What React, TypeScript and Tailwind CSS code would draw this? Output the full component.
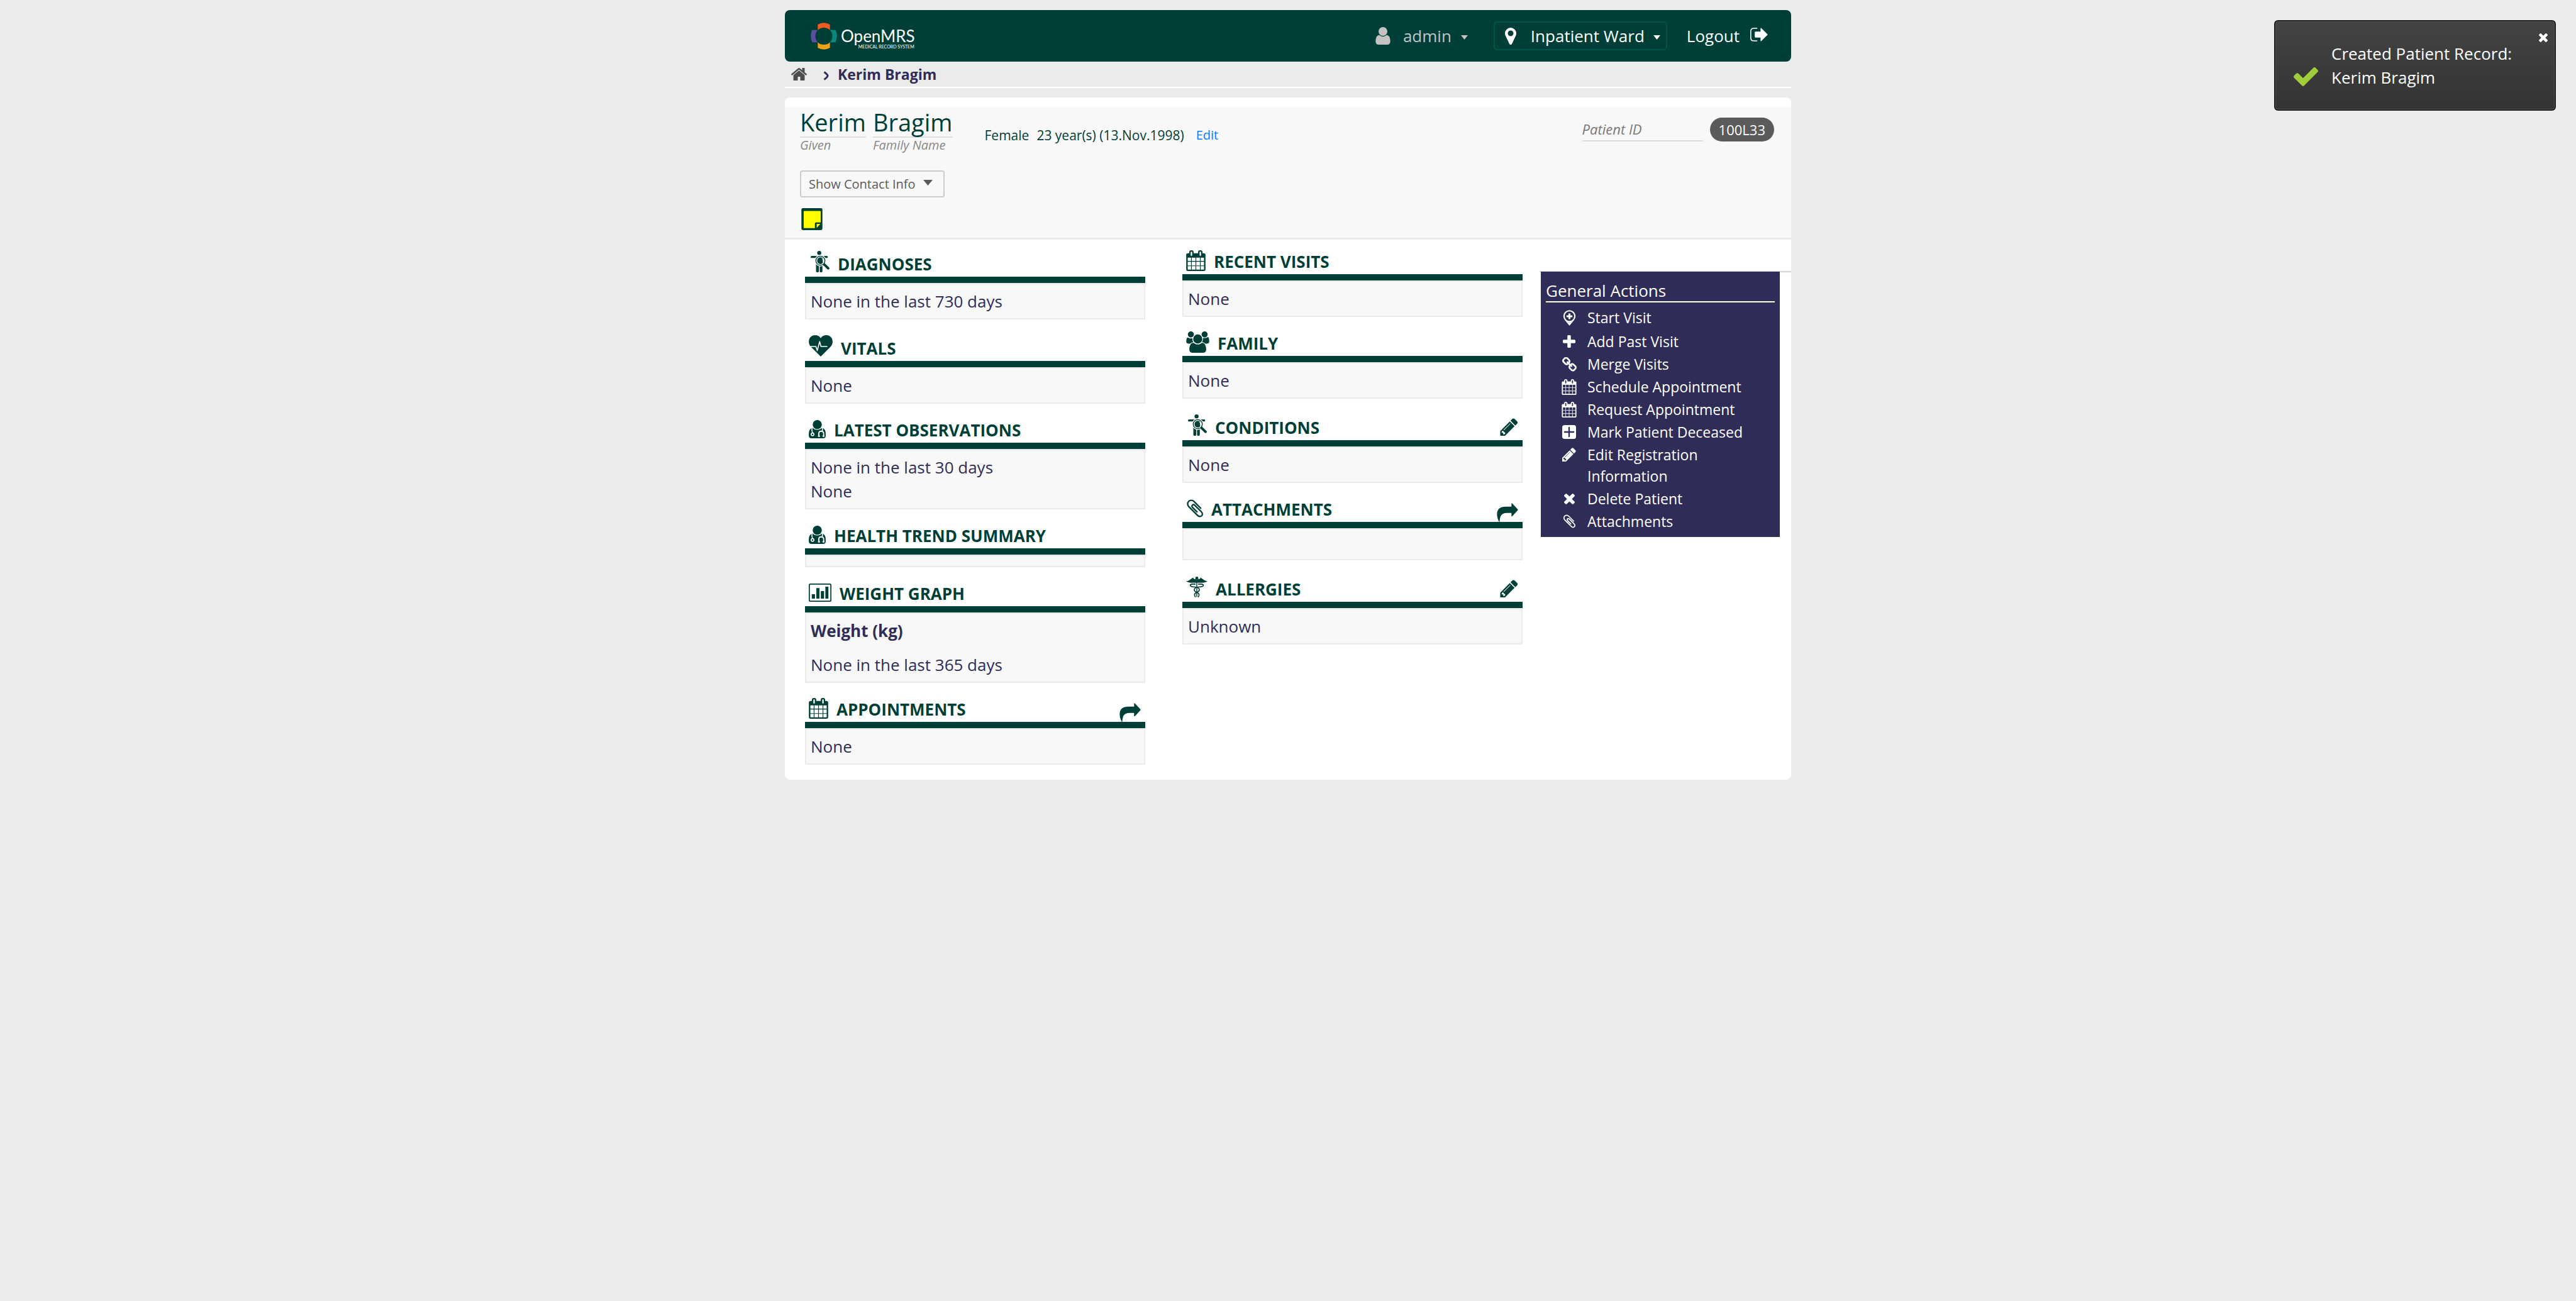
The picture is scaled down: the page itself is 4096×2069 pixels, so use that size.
import React from "react";

type IconProps = { className?: string };

function Glyph({ box, d, className }: { box: string; d: string; className?: string }) {
  return (
    <svg viewBox={box} className={className} fill="currentColor" aria-hidden="true">
      <path d={d} />
    </svg>
  );
}

const HomeIcon = ({ className }: IconProps) => (
  <Glyph
    className={className}
    box="97 253 1598 1283"
    d="M1472 992v480q0 26-19 45t-45 19h-384v-384h-256v384h-384q-26 0-45-19t-19-45v-480q0-1 .5-3t.5-3l575-474 575 474q1 2 1 6zm223-69l-62 74q-8 9-21 11h-3q-13 0-21-7l-692-577-692 577q-12 8-24 7-13-2-21-11l-62-74q-8-10-7-23.5t11-21.5l719-599q32-26 76-26t76 26l244 204v-195q0-14 9-23t23-9h192q14 0 23 9t9 23v408l219 182q10 8 11 21.5t-7 23.5z"
  />
);

const UserIcon = ({ className }: IconProps) => (
  <Glyph
    className={className}
    box="256 128 1280 1536"
    d="M1536 1399q0 109-62.5 187t-150.5 78h-854q-88 0-150.5-78t-62.5-187q0-85 8.5-160.5t31.5-152 58.5-131 94-89 134.5-34.5q131 128 313 128t313-128q76 0 134.5 34.5t94 89 58.5 131 31.5 152 8.5 160.5zm-256-887q0 159-112.5 271.5t-271.5 112.5-271.5-112.5-112.5-271.5 112.5-271.5 271.5-112.5 271.5 112.5 112.5 271.5z"
  />
);

const PinIcon = ({ className }: IconProps) => (
  <Glyph
    className={className}
    box="384 128 1024 1536"
    d="M1152 640q0-106-75-181t-181-75-181 75-75 181 75 181 181 75 181-75 75-181zm256 0q0 109-33 179l-364 774q-16 33-47.5 52t-67.5 19-67.5-19-46.5-52l-365-774q-33-70-33-179 0-212 150-362t362-150 362 150 150 362z"
  />
);

const SignOutIcon = ({ className }: IconProps) => (
  <svg viewBox="0 0 35 27" className={className} aria-hidden="true">
    <path d="M14 1H7Q1 1 1 7V20Q1 26 7 26H14" fill="none" stroke="currentColor" strokeWidth="2" />
    <path
      fill="currentColor"
      d="M20.5 1.6Q20.5 0 22 .6L34 12.6Q35 13.5 34 14.4L22 26.4Q20.5 27 20.5 25.4V19.5H10.5Q9 19.5 9 18V9Q9 7.5 10.5 7.5H20.5z"
    />
  </svg>
);

const CalendarIcon = ({ className }: IconProps) => (
  <Glyph
    className={className}
    box="64 0 1664 1792"
    d="M192 1664h288v-288h-288v288zm352 0h320v-288h-320v288zm-352-352h288v-320h-288v320zm352 0h320v-320h-320v320zm-352-384h288v-288h-288v288zm736 736h320v-288h-320v288zm-384-736h320v-288h-320v288zm768 736h288v-288h-288v288zm-384-352h320v-320h-320v320zm-352-864v-288q0-13-9.5-22.5t-22.5-9.5h-64q-13 0-22.5 9.5t-9.5 22.5v288q0 13 9.5 22.5t22.5 9.5h64q13 0 22.5-9.5t9.5-22.5zm736 864h288v-320h-288v320zm-384-384h320v-288h-320v288zm384 0h288v-288h-288v288zm32-480v-288q0-13-9.5-22.5t-22.5-9.5h-64q-13 0-22.5 9.5t-9.5 22.5v288q0 13 9.5 22.5t22.5 9.5h64q13 0 22.5-9.5t9.5-22.5zm384-64v1280q0 52-38 90t-90 38h-1408q-52 0-90-38t-38-90v-1280q0-52 38-90t90-38h128v-96q0-66 47-113t113-47h64q66 0 113 47t47 113v96h384v-96q0-66 47-113t113-47h64q66 0 113 47t47 113v96h128q52 0 90 38t38 90z"
  />
);

const PlusIcon = ({ className }: IconProps) => (
  <Glyph
    className={className}
    box="192 128 1408 1408"
    d="M1600 736v192q0 40-28 68t-68 28h-416v416q0 40-28 68t-68 28h-192q-40 0-68-28t-28-68v-416h-416q-40 0-68-28t-28-68v-192q0-40 28-68t68-28h416v-416q0-40 28-68t68-28h192q40 0 68 28t28 68v416h416q40 0 68 28t28 68z"
  />
);

const TimesIcon = ({ className }: IconProps) => (
  <Glyph
    className={className}
    box="302 366 1188 1188"
    d="M1490 1322q0 40-28 68l-136 136q-28 28-68 28t-68-28l-294-294-294 294q-28 28-68 28t-68-28l-136-136q-28-28-28-68t28-68l294-294-294-294q-28-28-28-68t28-68l136-136q28-28 68-28t68 28l294 294 294-294q28-28 68-28t68 28l136 136q28 28 28 68t-28 68l-294 294 294 294q28 28 28 68z"
  />
);

const CheckIcon = ({ className }: IconProps) => (
  <Glyph
    className={className}
    box="121 334 1550 1188"
    d="M1671 566q0 40-28 68l-724 724-136 136q-28 28-68 28t-68-28l-136-136-362-362q-28-28-28-68t28-68l136-136q28-28 68-28t68 28l294 295 656-657q28-28 68-28t68 28l136 136q28 28 28 68z"
  />
);

const PencilIcon = ({ className }: IconProps) => (
  <Glyph
    className={className}
    box="128 128 1536 1536"
    d="M491 1536l91-91-235-235-91 91v107h128v128h107zm523-928q0-22-22-22-10 0-17 7l-542 542q-7 7-7 17 0 22 22 22 10 0 17-7l542-542q7-7 7-17zm-54-192l416 416-832 832h-416v-416zm683 96q0 53-37 90l-166 166-416-416 166-165q36-38 90-38 53 0 91 38l235 234q37 39 37 91z"
  />
);

const ClipIcon = ({ className }: IconProps) => (
  <Glyph
    className={className}
    box="128 128 1468 1536"
    d="M1596 1385q0 117-79 196t-196 79q-135 0-235-100l-777-776q-113-115-113-271 0-159 110-270t269-111q158 0 273 113l605 606q10 10 10 22 0 16-30.5 46.5t-46.5 30.5q-13 0-23-10l-606-607q-79-77-181-77-106 0-179 75t-73 181q0 105 76 181l776 777q63 63 145 63 64 0 106-42t42-106q0-82-63-145l-581-581q-26-24-60-24-29 0-48 19t-19 48q0 32 25 59l410 410q10 10 10 22 0 16-31 47t-47 31q-12 0-22-10l-410-410q-63-61-63-149 0-82 57-139t139-57q88 0 149 63l581 581q100 98 100 235z"
  />
);

const LinkIcon = ({ className }: IconProps) => (
  <Glyph
    className={className}
    box="80 79 1632 1569"
    d="M1520 1216q0-40-28-68l-208-208q-28-28-68-28-42 0-72 32 3 3 19 18.5t21.5 21.5 15 19 13 25.5 3.5 27.5q0 40-28 68t-68 28q-15 0-27.5-3.5t-25.5-13-19-15-21.5-21.5-18.5-19q-33 31-33 73 0 40 28 68l206 207q27 27 68 27 40 0 68-26l147-146q28-28 28-67zm-703-705q0-40-28-68l-206-207q-28-28-68-28-39 0-68 27l-147 146q-28 28-28 67 0 40 28 68l208 208q27 27 68 27 42 0 72-31-3-3-19-18.5t-21.5-21.5-15-19-13-25.5-3.5-27.5q0-40 28-68t68-28q15 0 27.5 3.5t25.5 13 19 15 21.5 21.5 18.5 19q33-31 33-73zm895 705q0 120-85 203l-147 146q-83 83-203 83-121 0-204-85l-206-207q-83-83-83-203 0-123 88-209l-88-88q-86 88-208 88-120 0-204-84l-208-208q-84-84-84-204t85-203l147-146q83-83 203-83 121 0 204 85l206 207q83 83 83 203 0 123-88 209l88 88q86-88 208-88 120 0 204 84l208 208q84 84 84 204z"
  />
);

const FamilyIcon = ({ className }: IconProps) => (
  <Glyph
    className={className}
    box="0 0 1920 1792"
    d="M593 896q-162 5-265 128h-134q-82 0-138-40.5t-56-118.5q0-353 124-353 6 0 43.5 21t97.5 42.5 119 21.5q67 0 133-23-5 37-5 66 0 159 81 288zm1071 637q0 120-73 189.5t-194 69.5h-874q-121 0-194-69.5t-73-189.5q0-53 3.5-103.5t14-109 26.5-108.5 43-97.5 62-81 85.5-53.5 111.5-20q10 0 43 21.5t73 48 107 48 135 21.5 135-21.5 107-48 73-48 43-21.5q61 0 111.5 20t85.5 53.5 62 81 43 97.5 26.5 108.5 14 109 3.5 103.5zm-1024-1277q0 106-75 181t-181 75-181-75-75-181 75-181 181-75 181 75 75 181zm704 384q0 159-112.5 271.5t-271.5 112.5-271.5-112.5-112.5-271.5 112.5-271.5 271.5-112.5 271.5 112.5 112.5 271.5zm576 225q0 78-56 118.5t-138 40.5h-134q-103-123-265-128 81-129 81-288 0-29-5-66 66 23 133 23 59 0 119-21.5t97.5-42.5 43.5-21q124 0 124 353zm-128-609q0 106-75 181t-181 75-181-75-75-181 75-181 181-75 181 75 75 181z"
  />
);

const DiagnosisIcon = ({ className }: IconProps) => (
  <svg viewBox="24 29 123 127" className={className} aria-hidden="true">
    <g fill="currentColor">
      <circle cx="86" cy="41" r="12" />
      <rect x="35" y="59" width="102" height="12" rx="6" />
      <rect x="67" y="62" width="38" height="44" />
      <rect x="67" y="100" width="17" height="56" rx="7" />
      <rect x="89" y="100" width="16" height="56" rx="7" />
    </g>
    <path d="M108 103L140 133" stroke="#fff" strokeWidth="24" />
    <circle cx="93" cy="87" r="34" fill="#fff" />
    <path d="M112 106L139 132" stroke="currentColor" strokeWidth="15" strokeLinecap="round" />
    <circle cx="93" cy="87" r="27" fill="#fff" stroke="currentColor" strokeWidth="5" />
    <path d="M93 67Q104 66 107 73V101Q101 107 93 107Q74 105 74 87Q74 69 93 67z" fill="currentColor" />
    <path d="M101 73Q108 77 109 86" fill="none" stroke="#fff" strokeWidth="3" />
  </svg>
);

const VitalsIcon = ({ className }: IconProps) => (
  <svg viewBox="24 530 141 127" className={className} aria-hidden="true">
    <path
      fill="currentColor"
      d="M94.500 657L38 601C26 589 24 579 24 568C24 546 40 530 60 530C76 530 88 537 94.500 548C101 537 113 530 129 530C149 530 165 546 165 568C165 579 163 589 151 601z"
    />
    <path
      d="M34 597H66L74 622L88 568L96 597H134"
      fill="none"
      stroke="#fff"
      strokeWidth="6"
      strokeLinejoin="round"
    />
  </svg>
);

const DoctorIcon = ({ className }: IconProps) => (
  <svg viewBox="24 1035 100 108" className={className} aria-hidden="true">
    <circle cx="74" cy="1062" r="27" fill="currentColor" />
    <path
      fill="currentColor"
      d="M46 1081Q24 1087 24 1119V1128Q24 1143 40 1143H108Q124 1143 124 1128V1119Q124 1087 102 1081Q90 1093 74 1093Q58 1093 46 1081z"
    />
    <g fill="none" stroke="#fff" strokeWidth="6">
      <path d="M43 1080Q40 1094 46 1112" />
      <path d="M103 1080Q107 1090 103 1100" />
      <path d="M83 1128V1116Q83 1101 97 1101Q112 1101 112 1116V1128" strokeWidth="7" />
      <circle cx="46" cy="1120" r="8" />
    </g>
    <circle cx="84" cy="1130" r="6" fill="#fff" />
    <circle cx="111" cy="1130" r="6" fill="#fff" />
  </svg>
);

const ChartIcon = ({ className }: IconProps) => (
  <svg viewBox="24 357 135 108" className={className} aria-hidden="true">
    <rect x="27" y="360" width="129" height="102" rx="7" fill="none" stroke="currentColor" strokeWidth="7" />
    <path fill="currentColor" d="M42 420h19v27h-19zM69 384h19v63h-19zM96 402h19v45h-19zM123 375h18v72h-18z" />
  </svg>
);

const ShareIcon = ({ className }: IconProps) => (
  <svg viewBox="0 0 41 37" className={className} aria-hidden="true">
    <path
      fill="currentColor"
      d="M28.300 1.200Q28.300 -.3 29.800 .5L40.600 12.300Q41.300 13.200 40.600 14.100L29.800 26Q28.300 26.800 28.300 25.400V19.300H20Q10 19.300 7 26Q5 31 5 37H4.300Q0 30 0 22Q0 7 17 7H28.300z"
    />
  </svg>
);

const CaduceusIcon = ({ className }: IconProps) => (
  <svg viewBox="0 0 42 41" className={className} aria-hidden="true">
    <g fill="currentColor">
      <circle cx="21" cy="3" r="2.900" />
      <path d="M0 9Q4 8.800 7 6.500L13.500 1.800Q15.500 6.500 18 4.500L21 7L24 4.500Q26.500 6.500 28.500 1.800L35 6.500Q38 8.800 42 9Q38.500 12 33 12H9Q3.500 12 0 9z" />
    </g>
    <g fill="none" stroke="currentColor">
      <path d="M21 5V40" strokeWidth="1.800" />
      <path
        strokeWidth="2"
        d="M18.500 14.800H12Q8 15.200 8 17.500Q9 20 17 20.500Q26 21.500 26 26Q26 29 21 31Q16.500 33 16.500 36Q16.500 38.500 18.500 40.500M23.500 14.800H30Q34 15.200 34 17.500Q33 20 25 20.500Q16 21.500 16 26Q16 29 21 31Q25.500 33 25.500 36Q25.500 38.500 23.500 40.500"
      />
    </g>
  </svg>
);

const StartVisitIcon = ({ className }: IconProps) => (
  <svg viewBox="50 87 73 90" className={className} aria-hidden="true">
    <circle cx="86.500" cy="122.500" r="31" fill="none" stroke="currentColor" strokeWidth="8" />
    <path d="M62 147Q86 168 111 147L86.500 177z" fill="currentColor" />
    <path d="M70 123H103M86.500 107V139" stroke="currentColor" strokeWidth="11" />
  </svg>
);

const DeceasedIcon = ({ className }: IconProps) => (
  <svg viewBox="0 0 84 84" className={className} aria-hidden="true">
    <rect width="84" height="84" rx="14" fill="currentColor" />
    <path d="M15 42H69M42 15V69" stroke="#2f2d57" strokeWidth="9" strokeLinecap="round" />
  </svg>
);

const Caret = ({ className }: IconProps) => (
  <svg viewBox="0 0 14 8" preserveAspectRatio="none" className={className} aria-hidden="true">
    <path d="M0 0H14L7 8z" fill="currentColor" />
  </svg>
);

function Logo() {
  return (
    <a href="#home" className="flex items-end gap-[6px]" aria-label="OpenMRS Medical Record System">
      <svg viewBox="0 0 52 53" className="h-[43px] w-[42px]" aria-hidden="true">
        <path d="M14 14.500V3.500Q26 -3 38 3.500V14.500A17.500 17.500 0 0 0 14 14.500z" fill="#f15b22" />
        <path d="M14 38.500V49.500Q26 56 38 49.500V38.500A17.500 17.500 0 0 1 14 38.500z" fill="#f0a115" />
        <path d="M14 14.500H3Q-2.500 26.500 3 38.500H14A17.500 17.500 0 0 1 14 14.500z" fill="#5b4fa0" />
        <path d="M38 14.500H49Q54.500 26.500 49 38.500H38A17.500 17.500 0 0 0 38 14.500z" fill="#0a8a7b" />
      </svg>
      <span className="flex flex-col items-end pb-px font-['Lato'] text-white">
        <span className="text-[26px] leading-[26px]">OpenMRS</span>
        <span className="pr-px text-[7px] leading-[8px]">MEDICAL RECORD SYSTEM</span>
      </span>
    </a>
  );
}

function TopBar() {
  return (
    <header className="flex h-[82px] items-center justify-between rounded-lg bg-[#003f37] pr-[37px] pl-[41px] text-[26px] leading-[38px] text-white">
      <Logo />
      <nav className="flex items-center">
        <button type="button" className="flex items-center text-[#c4c4c4]">
          <UserIcon className="mr-5 h-[28px] w-[24px]" />
          admin
          <Caret className="mt-1 ml-[15px] h-[7px] w-[11px]" />
        </button>
        <button
          type="button"
          className="ml-[41px] flex h-[46px] items-center rounded-md border-2 border-[#00554b] pr-[9px] pl-[16px]"
        >
          <PinIcon className="mr-[23px] h-[27px] w-[18px]" />
          Inpatient Ward
          <Caret className="mt-1 ml-[14px] h-[7px] w-[11px]" />
        </button>
        <a href="#logout" className="ml-[31px] flex items-center">
          Logout
          <SignOutIcon className="mb-1 ml-[17px] h-[22px] w-[28px]" />
        </a>
      </nav>
    </header>
  );
}

function Breadcrumbs() {
  return (
    <nav
      aria-label="Breadcrumb"
      className="flex h-[42px] items-center border-b-2 border-white pl-[10px] text-[23px] font-bold text-[#2f2d57]"
    >
      <a href="#home" aria-label="Home" className="text-[#4d4d4d]">
        <HomeIcon className="h-[20px] w-[25px]" />
      </a>
      <svg viewBox="0 0 9 15" className="mt-1 mr-[14px] ml-[26px] h-[15px] w-[9px]" aria-hidden="true">
        <path d="M1.500 1.500Q7 5.500 7 7.500T1.500 13.500" fill="none" stroke="#2f2d57" strokeWidth="3" />
      </svg>
      Kerim Bragim
    </nav>
  );
}

function NamePart({ value, label }: { value: string; label: string }) {
  return (
    <div>
      <div className="border-b-2 border-[#dddddd] text-[38px] leading-[46px]">{value}</div>
      <div className="text-[20px] leading-[24px] text-[#888888] italic">{label}</div>
    </div>
  );
}

function PatientHeader() {
  return (
    <section className="border-b-3 border-[#ebebeb] bg-[#f8f8f8] px-6 pb-3 text-[#003f37]">
      <div className="flex items-start">
        <div className="flex gap-[11px]">
          <NamePart value="Kerim" label="Given" />
          <NamePart value="Bragim" label="Family Name" />
        </div>
        <div className="mt-[29px] ml-[51px] flex gap-[12px] text-[21px] leading-[30px]">
          <span>Female</span>
          <span>23 year(s) (13.Nov.1998)</span>
          <a href="#edit" className="ml-[7px] text-[20px] text-[#007fff]">
            Edit
          </a>
        </div>
        <div className="mt-4 mr-[3px] ml-auto flex items-start gap-[11px]">
          <div className="w-[192px] border-b-2 border-[#dddddd] text-[22px] leading-[36px] text-[#777777] italic">
            Patient ID
          </div>
          <div className="rounded-full bg-[#5b5b5b] px-[14px] text-[22px] leading-[38px] text-white">100L33</div>
        </div>
      </div>
      <button
        type="button"
        className="mt-[28px] flex h-[43px] items-center gap-3 rounded border-2 border-[#cccccc] pr-[17px] pl-[12px] text-[20px] text-[#5b5b5b]"
      >
        Show Contact Info
        <Caret className="mb-1 h-[9px] w-[15px]" />
      </button>
      <button type="button" aria-label="Sticky note" className="mt-[17px] ml-[2px] block">
        <svg viewBox="0 0 42 44" className="h-[35px] w-[34px]" aria-hidden="true">
          <rect width="42" height="44" rx="3" fill="#003f37" />
          <path d="M6 5.500H37Q38.500 5.500 38.500 7V28.500H29Q27 28.500 27 30.500V40H6Q4.500 40 4.500 38.500V7Q4.500 5.500 6 5.500z" fill="#ffff00" />
          <path d="M30.500 31.500H38L30.500 39.500z" fill="#ffff00" />
        </svg>
      </button>
    </section>
  );
}

type SectionProps = {
  title: string;
  icon: React.ReactNode;
  tall?: boolean;
  action?: React.ReactNode;
  children?: React.ReactNode;
};

function InfoSection({ title, icon, tall, action, children }: SectionProps) {
  return (
    <section className="mb-4">
      <div
        className={
          tall
            ? "flex h-[60px] items-end border-b-10 border-[#003f37] pr-[7px] pl-[6px] text-[#003f37]"
            : "flex h-[56px] items-end border-b-10 border-[#003f37] pr-[7px] pl-[6px] text-[#003f37]"
        }
      >
        {icon}
        <h3 className="ml-[13px] flex-1 text-[26px] leading-[40px] font-bold">{title}</h3>
        {action}
      </div>
      <div className="border-2 border-[#ebebeb] bg-[#f8f8f8] px-[7px] py-2 text-[26px] leading-[38px] text-[#2f2d57]">
        {children}
      </div>
    </section>
  );
}

function EditLink({ label }: { label: string }) {
  return (
    <a href="#edit" aria-label={label} className="mb-[7px]">
      <PencilIcon className="h-[28px] w-[29px]" />
    </a>
  );
}

function OpenLink({ label }: { label: string }) {
  return (
    <a href="#open" aria-label={label}>
      <ShareIcon className="h-[30px] w-[34px]" />
    </a>
  );
}

const actions = [
  { label: "Start Visit", icon: <StartVisitIcon className="h-[25px] w-[23px]" /> },
  { label: "Add Past Visit", icon: <PlusIcon className="h-[20px] w-[20px]" /> },
  { label: "Merge Visits", icon: <LinkIcon className="h-[23px] w-[23px]" /> },
  { label: "Schedule Appointment", icon: <CalendarIcon className="h-[25px] w-[24px]" /> },
  { label: "Request Appointment", icon: <CalendarIcon className="h-[25px] w-[24px]" /> },
  { label: "Mark Patient Deceased", icon: <DeceasedIcon className="h-[22px] w-[22px]" /> },
  { label: "Edit Registration Information", icon: <PencilIcon className="h-[22px] w-[22px]" /> },
  { label: "Delete Patient", icon: <TimesIcon className="h-[17px] w-[17px]" /> },
  { label: "Attachments", icon: <ClipIcon className="h-[22px] w-[20px]" /> },
];

function GeneralActions() {
  return (
    <aside className="mt-[41px] ml-[27px] w-[400px] shrink-0 border-t-2 border-[#d8d8d8]">
      <div className="-mt-px mr-[18px] ml-[2px] bg-[#2f2d57] px-2 pt-[13px] pb-[6px] text-white">
        <h3 className="border-b-2 border-white text-[26px] leading-[34px]">General Actions</h3>
        <ul className="mt-[7px] text-[23px] leading-[34px]">
          {actions.map((action) => (
            <li key={action.label} className="pb-[2px] first:pb-1">
              <a href="#action" className="flex items-start pl-[22px]">
                <span className="mr-[14px] flex h-[34px] w-[30px] shrink-0 items-center justify-center">
                  {action.icon}
                </span>
                <span>{action.label}</span>
              </a>
            </li>
          ))}
        </ul>
      </div>
    </aside>
  );
}

function Toast() {
  return (
    <div
      role="status"
      className="absolute top-8 right-8 flex h-[144px] w-[448px] items-start rounded-md border-2 border-[#1c1c1c] bg-linear-to-b from-[#444444] to-[#333333] pt-8 pl-[29px] text-[26px] leading-[38px] text-white shadow-[inset_0_0_0_1px_#555555]"
    >
      <CheckIcon className="mt-[41px] mr-[21px] h-[30px] w-[39px] text-[#9fcd3c]" />
      <p>
        Created Patient Record:
        <br />
        Kerim Bragim
      </p>
      <button type="button" aria-label="Close" className="absolute top-[19px] right-[11px]">
        <TimesIcon className="h-[14px] w-[14px]" />
      </button>
    </div>
  );
}

export default function App() {
  return (
    <div className="relative min-h-screen bg-[#ebebeb] pt-4 font-['Open_Sans','Noto_Sans',sans-serif]">
      <div className="mx-auto max-w-[1600px]">
        <TopBar />
        <Breadcrumbs />
        <main className="mt-[15px] rounded-lg bg-white pt-4 pb-2">
          <PatientHeader />
          <div className="flex items-start pt-[9px] pl-8">
            <div className="flex flex-1 items-start gap-[59px]">
              <div className="flex-1">
                <InfoSection title="DIAGNOSES" tall icon={<DiagnosisIcon className="mb-[7px] h-[34px] w-[33px]" />}>
                  None in the last 730 days
                </InfoSection>
                <InfoSection title="VITALS" tall icon={<VitalsIcon className="mb-[7px] h-[34px] w-[38px]" />}>
                  None
                </InfoSection>
                <InfoSection title="LATEST OBSERVATIONS" icon={<DoctorIcon className="mb-[7px] h-[29px] w-[27px]" />}>
                  <p>None in the last 30 days</p>
                  <p>None</p>
                </InfoSection>
                <InfoSection title="HEALTH TREND SUMMARY" icon={<DoctorIcon className="mb-[7px] h-[29px] w-[27px]" />} />
                <InfoSection title="WEIGHT GRAPH" icon={<ChartIcon className="mb-[7px] h-[29px] w-[36px]" />}>
                  <h4 className="mb-4 font-bold">Weight (kg)</h4>
                  <p>None in the last 365 days</p>
                </InfoSection>
                <InfoSection
                  title="APPOINTMENTS"
                  icon={<CalendarIcon className="mb-[5px] h-[33px] w-[31px]" />}
                  action={<OpenLink label="Open appointments" />}
                >
                  None
                </InfoSection>
              </div>
              <div className="flex-1">
                <InfoSection title="RECENT VISITS" icon={<CalendarIcon className="mb-[5px] h-[33px] w-[31px]" />}>
                  None
                </InfoSection>
                <InfoSection title="FAMILY" icon={<FamilyIcon className="mb-[5px] h-[34px] w-[37px]" />}>
                  None
                </InfoSection>
                <InfoSection
                  title="CONDITIONS"
                  tall
                  icon={<DiagnosisIcon className="mb-[7px] h-[34px] w-[33px]" />}
                  action={<EditLink label="Edit conditions" />}
                >
                  None
                </InfoSection>
                <InfoSection
                  title="ATTACHMENTS"
                  icon={<ClipIcon className="mb-[7px] h-[29px] w-[27px]" />}
                  action={<OpenLink label="Open attachments" />}
                >
                  <div className="h-[31px]" />
                </InfoSection>
                <InfoSection
                  title="ALLERGIES"
                  tall
                  icon={<CaduceusIcon className="mb-[7px] h-[33px] w-[34px]" />}
                  action={<EditLink label="Edit allergies" />}
                >
                  Unknown
                </InfoSection>
              </div>
            </div>
            <GeneralActions />
          </div>
        </main>
      </div>
      <Toast />
    </div>
  );
}
